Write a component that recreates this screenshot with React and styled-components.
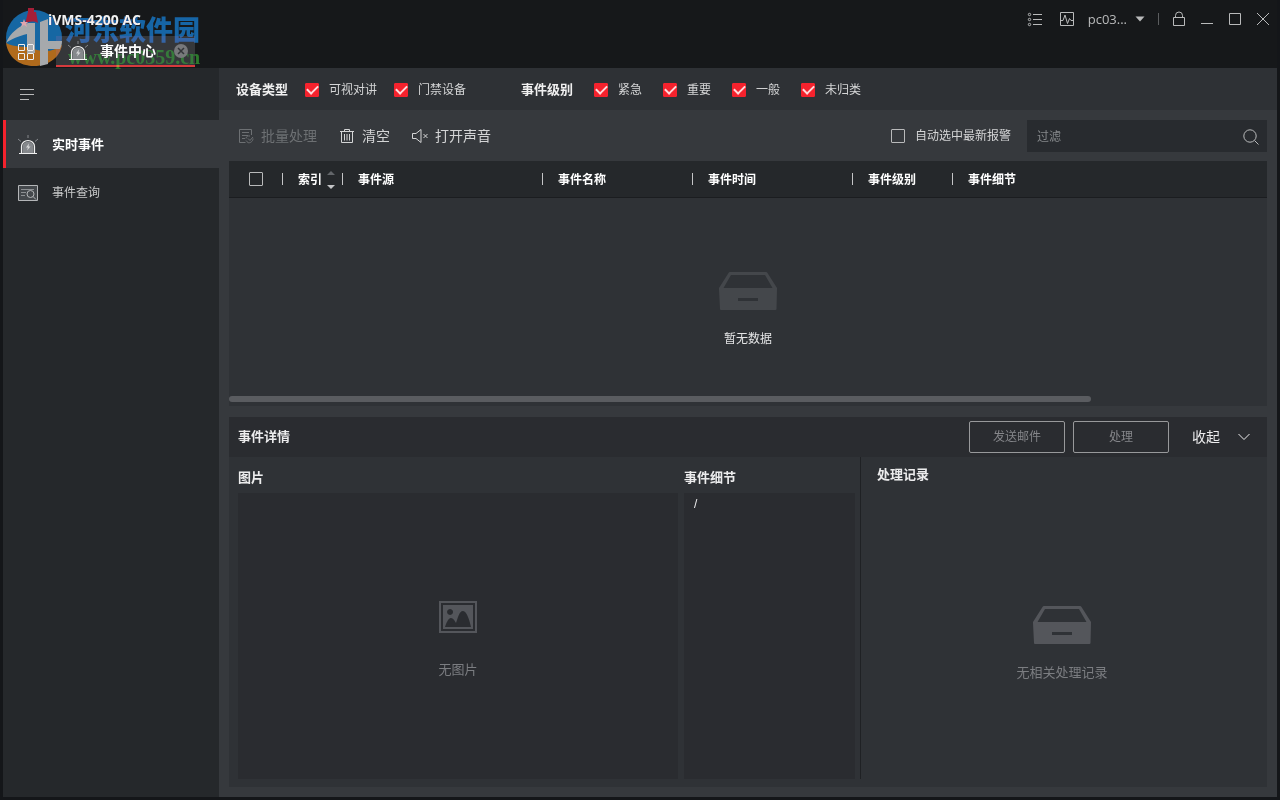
import React, { useState } from "react";
import styled, { createGlobalStyle, css } from "styled-components";

const DEVICE_TYPES = ["可视对讲", "门禁设备"];
const EVENT_LEVELS = ["紧急", "重要", "一般", "未归类"];
const COLUMNS = [
  { title: "索引", width: 60, sortable: true },
  { title: "事件源", width: 200 },
  { title: "事件名称", width: 150 },
  { title: "事件时间", width: 160 },
  { title: "事件级别", width: 100 },
  { title: "事件细节" },
];

const App = () => {
  const [filter, setFilter] = useState("");

  return (
    <>
      <GlobalStyle />
      <Window>
        <Header>
          <TitleRow>
            <Title>iVMS-4200 AC</Title>
            <WindowTools>
              <IconButton aria-label="任务列表">
                <ListIcon />
              </IconButton>
              <IconButton aria-label="运行状态">
                <ActivityIcon />
              </IconButton>
              <UserButton>
                pc03...
                <CaretIcon />
              </UserButton>
            </WindowTools>
            <HeaderDivider />
            <WindowControls>
              <IconButton aria-label="锁定">
                <LockIcon />
              </IconButton>
              <IconButton aria-label="最小化">
                <LineIcon d="M2 12.5h12" />
              </IconButton>
              <IconButton aria-label="最大化">
                <LineIcon d="M2.5 2.5h11v11h-11z" />
              </IconButton>
              <IconButton aria-label="关闭">
                <LineIcon d="M2 2l12 12M14 2L2 14" />
              </IconButton>
            </WindowControls>
          </TitleRow>
          <TabRow>
            <HomeButton aria-label="首页">
              <GridIcon />
            </HomeButton>
            <Tab>
              <AlarmIcon />
              <TabName>事件中心</TabName>
              <IconButton aria-label="关闭标签">
                <TabCloseIcon />
              </IconButton>
            </Tab>
          </TabRow>
          <Watermark>
            <WatermarkLogo />
            <WatermarkText>
              <SiteName>河东软件园</SiteName>
              <SiteUrl>www.pc0359.cn</SiteUrl>
            </WatermarkText>
          </Watermark>
        </Header>

        <Body>
          <Sidebar>
            <CollapseButton aria-label="折叠菜单">
              <LineIcon d="M1 2.5h14M1 7.5h14M1 12.5h9" />
            </CollapseButton>
            <NavItem href="#live" $active>
              <AlarmIcon />
              实时事件
            </NavItem>
            <NavItem href="#search">
              <EventSearchIcon />
              事件查询
            </NavItem>
          </Sidebar>

          <Main>
            <FilterBar>
              <FilterGroup $gap={17}>
                <FilterName>设备类型</FilterName>
                {DEVICE_TYPES.map((name) => (
                  <CheckLabel key={name}>
                    <Checkbox defaultChecked />
                    {name}
                  </CheckLabel>
                ))}
              </FilterGroup>
              <FilterGroup $gap={21}>
                <FilterName>事件级别</FilterName>
                {EVENT_LEVELS.map((name) => (
                  <CheckLabel key={name}>
                    <Checkbox defaultChecked />
                    {name}
                  </CheckLabel>
                ))}
              </FilterGroup>
            </FilterBar>

            <Content>
              <Toolbar>
                <ToolButton disabled>
                  <BatchIcon />
                  批量处理
                </ToolButton>
                <ToolButton>
                  <TrashIcon />
                  清空
                </ToolButton>
                <ToolButton>
                  <MuteIcon />
                  打开声音
                </ToolButton>
                <AutoSelect>
                  <Checkbox />
                  自动选中最新报警
                </AutoSelect>
                <SearchBox>
                  <SearchInput
                    aria-label="过滤"
                    placeholder="过滤"
                    value={filter}
                    onChange={(e) => setFilter(e.target.value)}
                  />
                  <IconButton aria-label="搜索">
                    <SearchIcon />
                  </IconButton>
                </SearchBox>
              </Toolbar>

              <TablePanel>
                <Table>
                  <colgroup>
                    <Col $width={54} />
                    {COLUMNS.map((col) => (
                      <Col key={col.title} $width={col.width} />
                    ))}
                  </colgroup>
                  <thead>
                    <tr>
                      <HeadCell $center>
                        <Checkbox aria-label="全选" />
                      </HeadCell>
                      {COLUMNS.map((col) => (
                        <HeadCell key={col.title}>
                          <HeadText>
                            {col.title}
                            {col.sortable && <SortIcon />}
                          </HeadText>
                        </HeadCell>
                      ))}
                    </tr>
                  </thead>
                </Table>
                <TableEmpty>
                  <DrawerIcon color="#44474b" />
                  暂无数据
                </TableEmpty>
                <ScrollTrack>
                  <ScrollThumb />
                </ScrollTrack>
              </TablePanel>

              <DetailPanel>
                <DetailHeader>
                  <SectionTitle>事件详情</SectionTitle>
                  <OutlineButton disabled>发送邮件</OutlineButton>
                  <OutlineButton disabled>处理</OutlineButton>
                  <FoldButton>
                    收起
                    <ChevronIcon />
                  </FoldButton>
                </DetailHeader>
                <DetailBody>
                  <EventInfo>
                    <InfoColumn>
                      <SectionTitle>图片</SectionTitle>
                      <InfoBox>
                        <MutedEmpty $top={8} $gap={28}>
                          <PictureIcon />
                          无图片
                        </MutedEmpty>
                      </InfoBox>
                    </InfoColumn>
                    <InfoColumn>
                      <SectionTitle>事件细节</SectionTitle>
                      <InfoBox>
                        <InfoText>/</InfoText>
                      </InfoBox>
                    </InfoColumn>
                  </EventInfo>
                  <Records>
                    <SectionTitle>处理记录</SectionTitle>
                    <MutedEmpty $top={18} $gap={20}>
                      <DrawerIcon color="#54565b" />
                      无相关处理记录
                    </MutedEmpty>
                  </Records>
                </DetailBody>
              </DetailPanel>
            </Content>
          </Main>
        </Body>
      </Window>
    </>
  );
};

export default App;

/* icons */

const LineIcon = ({ d }) => (
  <svg width="16" height="16" fill="none" stroke="currentColor">
    <path d={d} />
  </svg>
);

const ListIcon = () => (
  <svg width="16" height="16" fill="none" stroke="currentColor">
    <path d="M6 3.5h9M6 8.5h9M6 13.5h9" />
    <circle cx="2.5" cy="3.5" r="1.2" />
    <circle cx="2.5" cy="8.5" r="1.2" />
    <circle cx="2.5" cy="13.5" r="1.2" />
  </svg>
);

const ActivityIcon = () => (
  <svg width="16" height="16" fill="none" stroke="currentColor">
    <path d="M1.5 1.5h13v13h-13z" />
    <path d="M2 9.5h2l2-5.5 2.5 8.5 2-5 1.5 2h2" />
  </svg>
);

const CaretIcon = () => (
  <svg width="10" height="6" fill="currentColor">
    <path d="M0.5 0.5h9L5 5.5z" />
  </svg>
);

const LockIcon = () => (
  <svg width="16" height="16" fill="none" stroke="currentColor">
    <path d="M2.5 6.5h11v8h-11z" />
    <path d="M4.5 6.5v-2a3.5 3.5 0 0 1 7 0v2" />
  </svg>
);

const GridIcon = () => (
  <svg width="18" height="18" fill="none" stroke="currentColor">
    <path d="M1.5 1.5h6v6h-6zM10.5 1.5h6v6h-6zM1.5 10.5h6v6h-6zM10.5 10.5h6v6h-6z" />
  </svg>
);

const AlarmIcon = () => (
  <svg width="20" height="20" viewBox="0 0 20 20" fill="none">
    <path d="M4.5 18v-6a5.5 5.5 0 0 1 11 0v6z" fill="#85888c" />
    <path
      d="M1 18.5h18M3.5 18v-6.5a6.5 6 0 0 1 13 0V18"
      stroke="#f0f0f0"
      strokeWidth="1.2"
    />
    <path d="M10 0v3M0 4l3 2.5M20 4l-3 2.5" stroke="#85888c" />
    <path d="M11 8.5l-3 4h2l-1 3 3.5-4h-2z" fill="#d8d9da" />
  </svg>
);

const TabCloseIcon = () => (
  <svg width="14" height="14">
    <circle cx="7" cy="7" r="7" fill="#77787b" />
    <path d="M4 4l6 6M10 4l-6 6" stroke="#34363a" strokeWidth="1.5" />
  </svg>
);

const EventSearchIcon = () => (
  <svg width="20" height="20" fill="none" stroke="#b4b6b8">
    <path d="M0.5 2.5h19v15h-19z" fill="#44484c" />
    <path d="M3 6.5h13M3 9.5h5M3 12.5h4" stroke="#8d9093" />
    <circle cx="12.5" cy="11" r="3.5" />
    <path d="M15 13.5l3 3" />
  </svg>
);

const BatchIcon = () => (
  <svg width="16" height="16" fill="none" stroke="currentColor">
    <path d="M13.5 7V1.5h-12v13h6" />
    <path d="M4 4.5h7M4 7.5h6M4 10.5h3" />
    <path d="M8 10.5c0-2 2-3 4-2.5M15 10.5c0 3-3 5-5.5 4M8 12.5l2 2M10 10.5l2 2 3-3.5" />
  </svg>
);

const TrashIcon = () => (
  <svg width="16" height="16" fill="none" stroke="currentColor">
    <path d="M1 3.5h14M5.5 3V1.5h5V3M2.5 4v10.5h11V4M5.5 6v6.5M8 6v6.5M10.5 6v6.5" />
  </svg>
);

const MuteIcon = () => (
  <svg width="16" height="16" fill="none" stroke="currentColor">
    <path d="M0.5 5.5H4l5-4v13l-5-4H0.5zM11.5 6l4 4M15.5 6l-4 4" />
  </svg>
);

const SearchIcon = () => (
  <svg width="16" height="16" fill="none" stroke="currentColor">
    <circle cx="7" cy="7" r="6.2" />
    <path d="M11.5 11.5l4 4" />
  </svg>
);

const SortIcon = () => (
  <svg width="8" height="18">
    <path d="M4 0l4 4H0z" fill="#63666a" />
    <path d="M0 14h8l-4 4z" fill="#c4c5c7" />
  </svg>
);

const DrawerIcon = ({ color }) => (
  <svg width="58" height="38" fill={color}>
    <path
      fillRule="evenodd"
      d="M11 0h36a2 2 0 0 1 1.5 1L58 16v1l-0.5 20a1 1 0 0 1-1 1H2a1 1 0 0 1-1-1L0 17v-1L9.5 1A2 2 0 0 1 11 0zM12 3L4.5 16h49L46 3zM19 26v3h20v-3z"
    />
  </svg>
);

const PictureIcon = () => (
  <svg width="38" height="32" fill="#54565b">
    <path
      fillRule="evenodd"
      d="M0 0h38v32H0zM2 2v28h34V2zM4 4h30v24H4zM6 26h26C31 21 28 10 24 10c-4 0-5 7-7 12-1-2-3-5-5-5-3 0-5 6-6 9zM11 8a3 3 0 1 0 0.1 0z"
    />
  </svg>
);

const ChevronIcon = () => (
  <svg width="12" height="8" fill="none" stroke="currentColor">
    <path d="M0.5 1l5.5 5.5L11.5 1" />
  </svg>
);

const WatermarkLogo = () => (
  <svg width="60" height="62" viewBox="0 0 60 62">
    <circle cx="31" cy="33" r="28" fill="#1567a3" />
    <path
      d="M3 38c9 5 17 2 28 6 12 4 20 2 28-4-2 12-13 21-28 21S5 52 3 38z"
      fill="#b06a1c"
    />
    <path
      d="M3 38C7 28 16 21 25 18h7v30h-8V29C16 31 8 34 3 38zM37 17l8-3v22h14c0 3-1 6-2 8H45v15l-8 2z"
      fill="#a6a9ac"
    />
    <path d="M25 3h6v4h2l2 11c-4-2-9-2-13 1l3-12z" fill="#a51f38" />
    <path d="M21 14l1 3h3l-2 2 1 3-3-2-3 2 1-3-2-2h3z" fill="#e0a5ad" />
  </svg>
);

/* styles */

const GlobalStyle = createGlobalStyle`
  * {
    box-sizing: border-box;
  }
  body {
    margin: 0;
    background: #131517;
    color: #d4d5d6;
    font: 12px/16px "Liberation Sans", "Noto Sans CJK SC", sans-serif;
  }
  button, input {
    font: inherit;
    color: inherit;
  }
  button {
    border: 0;
    padding: 0;
    background: none;
  }
  svg {
    display: block;
    flex: none;
  }
`;

const Window = styled.div`
  display: flex;
  flex-direction: column;
  min-height: 100vh;
  padding: 0 3px 3px;
  background: #141619;
`;

const Header = styled.header`
  position: relative;
  height: 68px;
  background: #16181a;
`;

const TitleRow = styled.div`
  display: flex;
  align-items: center;
  height: 36px;
  padding: 2px 6px 0 45px;
`;

const Title = styled.h1`
  margin: 0 auto 0 0;
  padding-top: 2px;
  color: #f2f2f2;
  font: 700 14px/20px "Open Sans", sans-serif;
`;

const WindowTools = styled.div`
  display: flex;
  align-items: center;
  gap: 16px;
  color: #b9babb;
`;

const WindowControls = styled(WindowTools)`
  gap: 12px;
`;

const HeaderDivider = styled.span`
  width: 1px;
  height: 12px;
  margin: 0 12px 0 13px;
  background: #5b5d5f;
`;

const IconButton = styled.button`
  display: flex;
`;

const UserButton = styled.button`
  display: flex;
  align-items: center;
  gap: 8px;
  margin-left: -3px;
  font: 13px/16px "Open Sans", sans-serif;
`;

const TabRow = styled.div`
  display: flex;
  height: 31px;
`;

const HomeButton = styled.button`
  display: flex;
  align-items: center;
  width: 53px;
  padding-left: 14px;
  color: #f0f0f0;
`;

const Tab = styled.div`
  display: flex;
  align-items: center;
  width: 139px;
  padding: 0 7px 0 12px;
  border-bottom: 2px solid #d63a3d;
  background: #35373a;
`;

const TabName = styled.span`
  margin: 0 auto 0 12px;
  color: #fff;
  font-size: 14px;
  font-weight: 700;
`;

const Watermark = styled.div`
  position: absolute;
  top: 5px;
  left: 0;
  display: flex;
  gap: 2px;
  mix-blend-mode: lighten;
  pointer-events: none;
`;

const WatermarkText = styled.div`
  display: flex;
  flex-direction: column;
  padding-top: 9px;
`;

const SiteName = styled.span`
  color: #1565a6;
  font-size: 27px;
  font-weight: 900;
  line-height: 34px;
`;

const SiteUrl = styled.span`
  padding-left: 3px;
  color: #2c7a2c;
  font: 700 20px/18px "Liberation Serif", serif;
`;

const Body = styled.div`
  display: flex;
  flex: 1;
`;

const Sidebar = styled.nav`
  flex: none;
  width: 216px;
  background: #25282b;
`;

const CollapseButton = styled.button`
  display: flex;
  align-items: center;
  height: 52px;
  padding: 1px 0 0 16px;
  color: #b9babb;
`;

const NavItem = styled.a`
  display: flex;
  align-items: center;
  gap: 14px;
  height: 48px;
  padding: 1px 0 0 12px;
  border-left: 3px solid transparent;
  color: #c8c9ca;
  text-decoration: none;

  ${({ $active }) =>
    $active &&
    css`
      border-color: #f5222d;
      background: #36393d;
      color: #fff;
      font-size: 13px;
      font-weight: 700;
    `}
`;

const Main = styled.main`
  display: flex;
  flex-direction: column;
  flex: 1;
  min-width: 0;
  background: #36393d;
`;

const FilterBar = styled.div`
  display: flex;
  gap: 55px;
  height: 42px;
  padding: 1px 0 0 17px;
  background: #2e3135;
`;

const FilterGroup = styled.div`
  display: flex;
  align-items: center;
  gap: ${({ $gap }) => $gap}px;
`;

const FilterName = styled.span`
  color: #f0f0f0;
  font-size: 13px;
  font-weight: 700;
`;

const CheckLabel = styled.label`
  display: flex;
  align-items: center;
  gap: 10px;
`;

const Checkbox = styled.input.attrs({ type: "checkbox" })`
  appearance: none;
  display: inline-grid;
  place-items: center;
  width: 14px;
  height: 14px;
  margin: 0;
  border: 1px solid #b9babb;
  border-radius: 1px;

  &:checked {
    border-color: #f5222d;
    background: #f5222d;
  }

  &:checked::after {
    content: "";
    width: 9px;
    height: 5px;
    margin-bottom: 3px;
    border: solid #ffd9db;
    border-width: 0 0 2px 2px;
    rotate: -45deg;
  }
`;

const Content = styled.div`
  display: flex;
  flex-direction: column;
  flex: 1;
  padding: 0 10px 10px;
`;

const Toolbar = styled.div`
  display: flex;
  align-items: center;
  gap: 22px;
  padding: 10px 0 9px 9px;
`;

const ToolButton = styled.button`
  display: flex;
  align-items: center;
  gap: 7px;
  font-size: 14px;

  &:disabled {
    color: #6d7073;
  }
`;

const AutoSelect = styled(CheckLabel)`
  margin-left: auto;
`;

const SearchBox = styled.div`
  display: flex;
  align-items: center;
  width: 240px;
  height: 32px;
  margin-left: -6px;
  padding: 1px 8px 0 10px;
  background: #282b2f;
  color: #b9babb;
`;

const SearchInput = styled.input`
  flex: 1;
  min-width: 0;
  padding: 0;
  border: 0;
  outline: 0;
  background: none;

  &::placeholder {
    color: #85888b;
  }
`;

const TablePanel = styled.section`
  margin-bottom: 11px;
  background: #2f3236;
`;

const Table = styled.table`
  width: 100%;
  border-spacing: 0;
  table-layout: fixed;
  background: #25282b;
`;

const Col = styled.col`
  width: ${({ $width }) => ($width ? `${$width}px` : "auto")};
`;

const HeadCell = styled.th`
  height: 37px;
  padding: 2px 3px 0 15px;
  border-bottom: 1px solid #1b1d20;
  background: linear-gradient(#c4c5c7, #c4c5c7) right center / 1px 12px no-repeat;
  color: #fff;
  font-weight: 700;
  text-align: left;

  &:last-child {
    background: none;
  }

  ${({ $center }) =>
    $center &&
    css`
      padding: 0;
      text-align: center;
      line-height: 0;
    `}
`;

const HeadText = styled.div`
  display: flex;
  align-items: center;
  gap: 5px;
`;

const TableEmpty = styled.div`
  display: flex;
  flex-direction: column;
  align-items: center;
  gap: 21px;
  min-height: 198px;
  padding-top: 74px;
  color: #e4e5e6;
`;

const ScrollTrack = styled.div`
  padding-bottom: 4px;
`;

const ScrollThumb = styled.div`
  width: 83%;
  height: 6px;
  border-radius: 3px;
  background: #5a5c60;
`;

const DetailPanel = styled.section`
  display: flex;
  flex-direction: column;
  flex: 1;
  background: #2f3236;
`;

const DetailHeader = styled.div`
  display: flex;
  align-items: center;
  gap: 8px;
  height: 40px;
  padding: 0 17px 0 9px;
  background: #2a2c30;
`;

const SectionTitle = styled.h2`
  margin: 0 auto 0 0;
  color: #ececed;
  font-size: 13px;
  font-weight: 700;
  line-height: 16px;
`;

const OutlineButton = styled.button`
  width: 96px;
  height: 32px;
  border: 1px solid #98999b;
  border-radius: 2px;
  color: #85868a;
`;

const FoldButton = styled.button`
  display: flex;
  align-items: center;
  gap: 18px;
  margin-left: 15px;
  color: #ececed;
  font-size: 14px;
`;

const DetailBody = styled.div`
  display: grid;
  grid-template-columns: 632fr 406fr;
  flex: 1;
`;

const EventInfo = styled.div`
  display: grid;
  grid-template-columns: 440fr 171fr;
  gap: 6px;
  margin-bottom: 8px;
  padding: 13px 5px 0 9px;
  border-right: 1px solid #1f2124;
`;

const InfoColumn = styled.div`
  display: flex;
  flex-direction: column;
  gap: 7px;
`;

const InfoBox = styled.div`
  display: flex;
  flex: 1;
  background: #2a2c30;
`;

const InfoText = styled.p`
  margin: 0;
  padding: 3px 10px;
  color: #ececed;
`;

const MutedEmpty = styled.div`
  display: flex;
  flex: 1;
  flex-direction: column;
  align-items: center;
  justify-content: center;
  gap: ${({ $gap }) => $gap}px;
  min-height: 120px;
  padding-top: ${({ $top }) => $top}px;
  color: #7b7d81;
  font-size: 13px;
  line-height: 18px;
`;

const Records = styled.div`
  display: flex;
  flex-direction: column;
  padding: 10px 20px 0 16px;
`;
